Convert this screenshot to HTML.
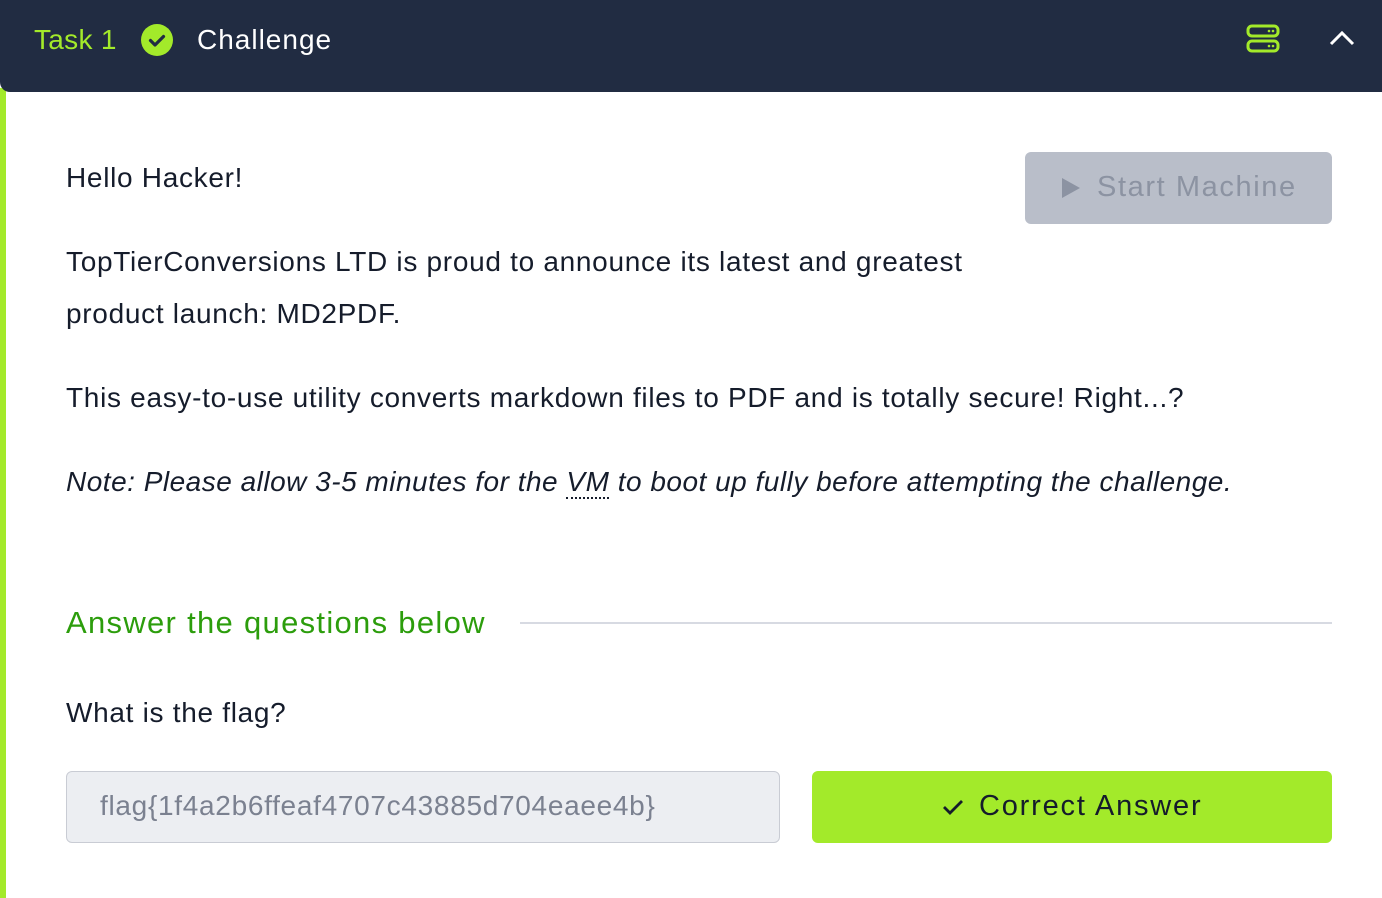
<!DOCTYPE html>
<html><head><meta charset="utf-8"><style>
body{margin:0;width:1382px;height:898px;overflow:hidden;background:#fff;font-family:"Liberation Sans",sans-serif;position:relative}
.hdr{position:absolute;left:0;top:0;width:1382px;height:92px;background:#212c42;border-radius:0 0 0 10px}
.bar{position:absolute;left:0;top:88px;width:6px;height:810px;background:#a3ea2a}
.t{position:absolute;white-space:nowrap;color:#151c2b;font-size:28px;letter-spacing:0.7px}
</style></head><body>
<div class="bar"></div>
<div class="hdr"></div>
<div class="t" style="left:34px;top:24px;color:#a3ea2a;font-size:28px;letter-spacing:0.3px">Task 1</div>
<svg style="position:absolute;left:140px;top:23px" width="34" height="34"><circle cx="17" cy="17" r="16" fill="#a3ea2a"/><path d="M10.5 17.5l4.5 4.5 8.5-8.5" stroke="#212c42" stroke-width="3.2" fill="none" stroke-linecap="round" stroke-linejoin="round"/></svg>
<div class="t" style="left:197px;top:24px;color:#fff;font-size:28px;letter-spacing:1px">Challenge</div>
<svg style="position:absolute;left:1246px;top:24px" width="36" height="30"><rect x="2" y="2" width="30" height="10" rx="4" fill="none" stroke="#a3ea2a" stroke-width="3"/><rect x="2" y="17" width="30" height="10" rx="4" fill="none" stroke="#a3ea2a" stroke-width="3"/><circle cx="23" cy="7" r="1.3" fill="#a3ea2a"/><circle cx="27" cy="7" r="1.3" fill="#a3ea2a"/><circle cx="23" cy="22" r="1.3" fill="#a3ea2a"/><circle cx="27" cy="22" r="1.3" fill="#a3ea2a"/></svg>
<svg style="position:absolute;left:1328px;top:28px" width="28" height="20"><path d="M3 16l11-11 11 11" stroke="#fff" stroke-width="3" fill="none"/></svg>

<div class="t" style="left:66px;top:162px">Hello Hacker!</div>
<div style="position:absolute;left:1025px;top:152px;width:307px;height:72px;background:#b9bec9;border-radius:6px"></div>
<svg style="position:absolute;left:1060px;top:176px" width="22" height="24"><path d="M2 2l18 10-18 10z" fill="#8c93a2"/></svg>
<div class="t" style="left:1097px;top:171px;color:#8c93a2;font-size:29px;letter-spacing:1.6px">Start Machine</div>
<div class="t" style="left:66px;top:246px">TopTierConversions LTD is proud to announce its latest and greatest</div>
<div class="t" style="left:66px;top:298px">product launch: MD2PDF.</div>
<div class="t" style="left:66px;top:382px">This easy-to-use utility converts markdown files to PDF and is totally secure! Right...?</div>
<div class="t" style="left:66px;top:466px;font-style:italic;letter-spacing:0.5px">Note: Please allow 3-5 minutes for the <span style="border-bottom:2px dotted #151c2b">VM</span> to boot up fully before attempting the challenge.</div>
<div class="t" style="left:66px;top:605px;color:#2c9d0c;font-size:31px;letter-spacing:1.3px">Answer the questions below</div>
<div style="position:absolute;left:520px;top:622px;width:812px;height:2px;background:#d7dae2"></div>
<div class="t" style="left:66px;top:697px">What is the flag?</div>
<div style="position:absolute;left:66px;top:771px;width:712px;height:70px;background:#eceef2;border:1px solid #c9ccd4;border-radius:6px"></div>
<div class="t" style="left:100px;top:790px;color:#7b8190;font-size:28px;letter-spacing:0.7px">flag{1f4a2b6ffeaf4707c43885d704eaee4b}</div>
<div style="position:absolute;left:812px;top:771px;width:520px;height:72px;background:#a3ea2a;border-radius:6px"></div>
<svg style="position:absolute;left:941px;top:797px" width="24" height="20"><path d="M3 10l6 6 12-12" stroke="#151c2b" stroke-width="2.8" fill="none"/></svg>
<div class="t" style="left:979px;top:790px;font-size:29px;letter-spacing:1.8px">Correct Answer</div>
</body></html>
